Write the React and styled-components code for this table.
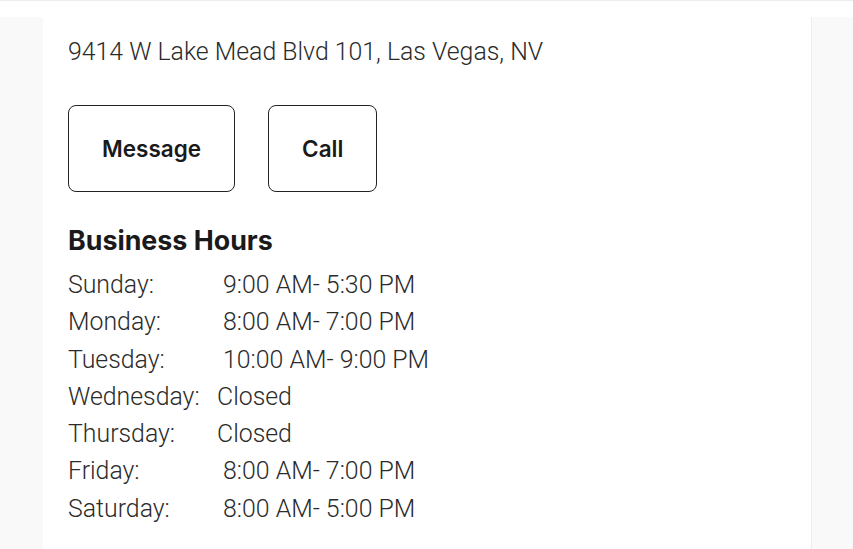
import React from "react";
import styled, { createGlobalStyle } from "styled-components";

const Global = createGlobalStyle`
  html, body { margin: 0; padding: 0; background: #f9f9f9; }
  body { font-family: Roboto, "Noto Sans", sans-serif; color: #222; }
`;

const TopBar = styled.header`
  position: fixed;
  top: 0;
  left: 0;
  right: 0;
  height: 17px;
  background: #fff;
  border-top: 1px solid #ececec;
  box-sizing: border-box;
  z-index: 2;
`;

const Page = styled.div`
  display: flex;
  padding: 0 41px 0 43px;
  min-height: 549px;
  box-sizing: border-box;
`;

const Card = styled.main`
  flex: 1;
  background: #fff;
  border-right: 1px solid #eeeeee;
  padding: 0 25px 24px;
  margin-top: -20px;
`;

const SectionTitle = styled.h2`
  margin: 0;
  font-family: Inter, "Noto Sans", sans-serif;
  font-weight: 700;
  font-size: 26.8px;
  line-height: 32px;
  color: #1a1a1a;
`;

const Address = styled.p`
  margin: 24px 0 0;
  font-family: Roboto, sans-serif;
  font-weight: 300;
  font-size: 24.85px;
  line-height: 32px;
  color: #2b2b2b;
`;

const Actions = styled.div`
  display: flex;
  gap: 33px;
  margin-top: 37px;
`;

const ActionButton = styled.button`
  height: 87px;
  padding: 0 ${(p) => p.$pad}px;
  border: 1.6px solid #222;
  border-radius: 8px;
  background: #fff;
  font-family: Inter, "Noto Sans", sans-serif;
  font-weight: 600;
  font-size: 22.5px;
  color: #1a1a1a;
  cursor: pointer;
`;

const HoursTitle = styled(SectionTitle)`
  margin-top: 32px;
`;

const HoursList = styled.div`
  margin-top: 10px;
  display: flex;
  flex-direction: column;
`;

const HourRow = styled.div`
  display: flex;
  font-family: Roboto, sans-serif;
  font-weight: 300;
  font-size: 24.85px;
  line-height: 37.3px;
  color: #2b2b2b;
  white-space: pre;
`;

const Day = styled.span`
  min-width: 149px;
`;

const hours = [
  ["Sunday:", " 9:00 AM- 5:30 PM"],
  ["Monday:", " 8:00 AM- 7:00 PM"],
  ["Tuesday:", " 10:00 AM- 9:00 PM"],
  ["Wednesday:", "Closed"],
  ["Thursday:", "Closed"],
  ["Friday:", " 8:00 AM- 7:00 PM"],
  ["Saturday:", " 8:00 AM- 5:00 PM"],
];

export default function App() {
  return (
    <>
      <Global />
      <TopBar />
      <Page>
        <Card>
          <SectionTitle>My Salon</SectionTitle>
          <Address>9414 W Lake Mead Blvd 101, Las Vegas, NV</Address>
          <Actions>
            <ActionButton $pad={33}>Message</ActionButton>
            <ActionButton $pad={33}>Call</ActionButton>
          </Actions>
          <HoursTitle>Business Hours</HoursTitle>
          <HoursList>
            {hours.map(([d, t]) => (
              <HourRow key={d}>
                <Day>{d}</Day>
                <span>{t}</span>
              </HourRow>
            ))}
          </HoursList>
        </Card>
      </Page>
    </>
  );
}
